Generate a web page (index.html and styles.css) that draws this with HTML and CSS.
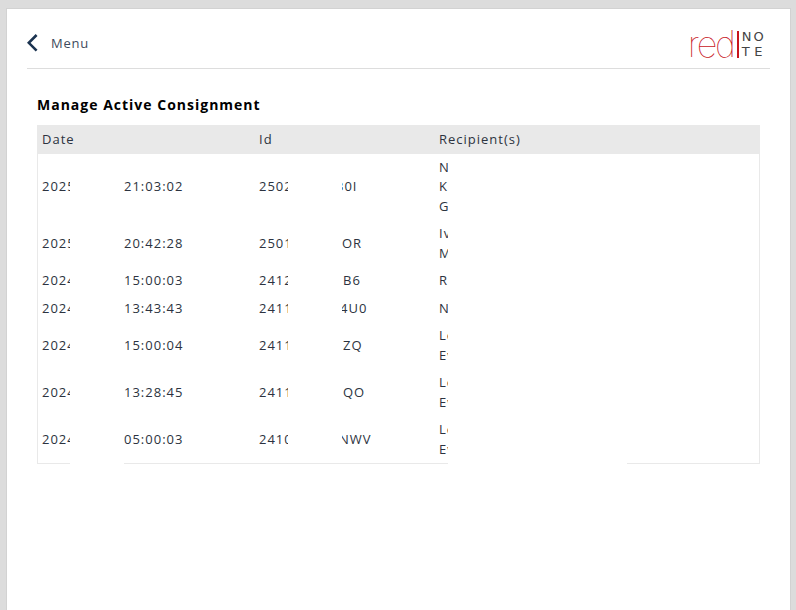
FILE: index.html
```html
<!DOCTYPE html>
<html lang="en">
<head>
  <meta charset="UTF-8">
  <meta name="viewport" content="width=device-width, initial-scale=1">
  <title>Manage Active Consignment</title>
  <link rel="stylesheet" href="styles.css">
</head>
<body>

<div class="page">
  <header class="topbar">
    <a class="back" href="#">
      <svg class="back-icon" width="12" height="18" viewBox="0 0 12 18" aria-hidden="true">
        <path d="M9.6 1 L1.8 8.8 L9.6 16.6" fill="none" stroke="#1b3350" stroke-width="2.6"/>
      </svg>
      <span>Menu</span>
    </a>
    <div class="logo">
      <span class="logo-red">red</span>
      <span class="logo-note"><span class="logo-no">NO</span><span class="logo-te">TE</span></span>
    </div>
  </header>

  <h1 class="title">Manage Active Consignment</h1>

  <div class="table-wrap">
    <table class="list">
      <colgroup>
        <col class="col-date">
        <col class="col-time">
        <col class="col-id">
        <col class="col-tail">
        <col>
      </colgroup>
      <thead>
        <tr>
          <th colspan="2">Date</th>
          <th colspan="2">Id</th>
          <th>Recipient(s)</th>
        </tr>
      </thead>
      <tbody>
        <tr>
          <td>2025</td><td>21:03:02</td>
          <td>2502</td><td class="cut-far">30I</td>
          <td>N<br>K<br>G</td>
        </tr>
        <tr>
          <td>2025</td><td>20:42:28</td>
          <td>2501</td><td class="cut-slight">OR</td>
          <td>Iv<br>M</td>
        </tr>
        <tr>
          <td>2024</td><td>15:00:03</td>
          <td>2412</td><td>B6</td>
          <td>R</td>
        </tr>
        <tr>
          <td>2024</td><td>13:43:43</td>
          <td>2411</td><td class="cut-near">4U0</td>
          <td>N</td>
        </tr>
        <tr>
          <td>2024</td><td>15:00:04</td>
          <td>2411</td><td>ZQ</td>
          <td>Le<br>Ev</td>
        </tr>
        <tr>
          <td>2024</td><td>13:28:45</td>
          <td>2411</td><td>QO</td>
          <td>Le<br>Ev</td>
        </tr>
        <tr>
          <td>2024</td><td>05:00:03</td>
          <td>2410</td><td class="cut-mid">NWV</td>
          <td>Le<br>Ev</td>
        </tr>
      </tbody>
    </table>
    <div class="mask mask-date"></div>
    <div class="mask mask-id"></div>
    <div class="mask mask-name"></div>
  </div>
</div>

</body>
</html>
```

FILE: styles.css
```css
html, body {
  height: 100%;
}

body {
  margin: 0;
  padding: 9px 6px 0 7px;
  box-sizing: border-box;
  background: #dcdcdc;
  font-family: 'Open Sans', sans-serif;
  font-size: 13px;
  letter-spacing: 1px;
  color: #2c3340;
  overflow: hidden;
}

.page {
  background: #fff;
  height: 100%;
  padding: 0 20px 0 20px;
  box-sizing: border-box;
  box-shadow: 0 0 0 1px #d2d2d2;
}

.topbar {
  display: flex;
  justify-content: space-between;
  align-items: flex-end;
  height: 59px;
  border-bottom: 1px solid #ddd;
}

.back {
  display: flex;
  align-items: center;
  gap: 12px;
  margin-bottom: 16px;
  letter-spacing: 0.8px;
  color: #3d4a5c;
  text-decoration: none;
}

.back-icon {
  display: block;
}

.logo {
  display: flex;
  align-items: flex-end;
  margin-bottom: 10px;
  margin-right: 3px;
}

.logo-red {
  font-family: 'Inter', sans-serif;
  font-weight: 100;
  font-size: 36px;
  line-height: 27px;
  letter-spacing: -2.2px;
  color: #c8141c;
  border-right: 2px solid #c8141c;
  padding-right: 3px;
}

.logo-note {
  display: flex;
  flex-direction: column;
  margin-bottom: -1px;
  padding-left: 3px;
  font-family: 'DejaVu Sans', sans-serif;
  font-size: 13px;
  line-height: 15px;
  color: #444;
}

.logo-no {
  letter-spacing: 2px;
}

.logo-te {
  letter-spacing: 4.5px;
}

.title {
  margin: 26px 0 11px 10px;
  font-size: 14px;
  line-height: 19px;
  font-weight: 700;
  color: #000;
}

.table-wrap {
  position: relative;
  margin-left: 10px;
  width: 723px;
}

.list {
  width: 723px;
  table-layout: fixed;
  border-collapse: separate;
  border-spacing: 0;
  border: 1px solid #e9e9e9;
  border-top: none;
}

.col-date {
  width: 81px;
}

.col-time {
  width: 135px;
}

.col-id {
  width: 84px;
}

.col-tail {
  width: 96px;
}

.list th {
  background: #e9e9e9;
  height: 27.75px;
  padding: 0 0 1px 5px;
  font-weight: 400;
  text-align: left;
}

.list td {
  padding: 4px 0 4px 5px;
  line-height: 19.5px;
  vertical-align: middle;
}

.list th:first-child,
.list td:first-child {
  padding-left: 4px;
}

/* the tails of some ids start under the blank block */
.list td.cut-far {
  padding-left: 0;
  text-indent: -2px;
}

.list td.cut-mid {
  padding-left: 1px;
}

.list td.cut-near {
  padding-left: 2px;
}

.list td.cut-slight {
  padding-left: 4px;
}

/* white blocks that blank out part of each row */
.mask {
  position: absolute;
  top: 29px;
  background: #fff;
}

.mask-date {
  left: 33px;
  width: 54px;
  height: 312px;
}

.mask-id {
  left: 251px;
  width: 54px;
  height: 308px;
}

.mask-name {
  left: 411px;
  width: 179px;
  height: 312px;
}
```
